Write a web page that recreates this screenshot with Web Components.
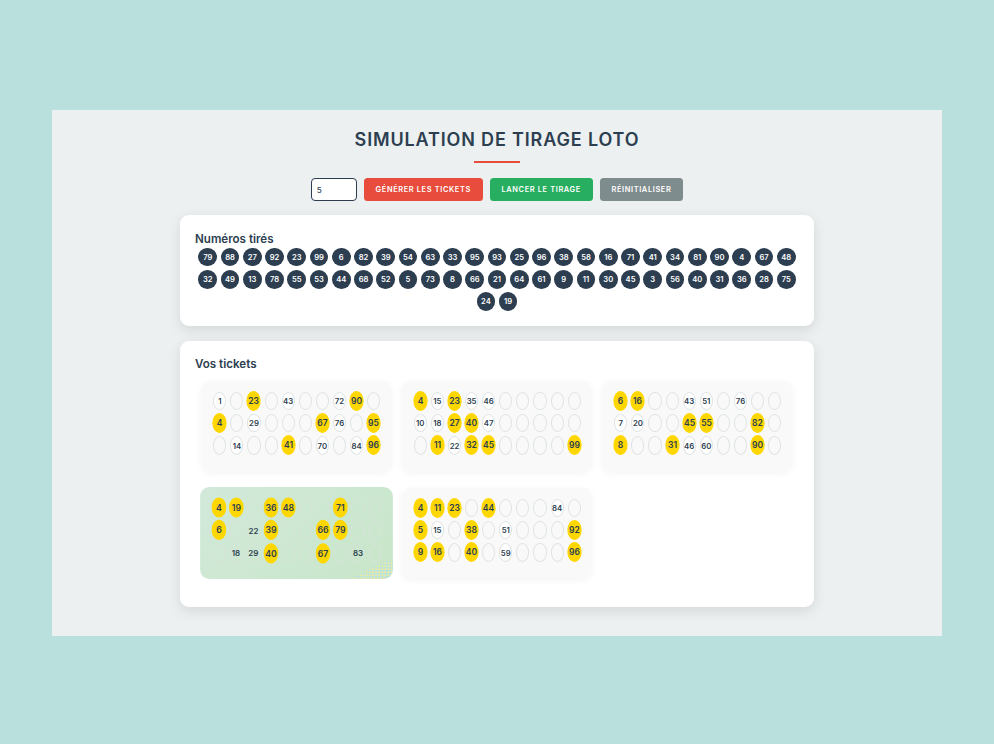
<!DOCTYPE html>
<html lang="fr">
<head>
<meta charset="utf-8">
<title>Simulation de tirage loto</title>
<style>
  html, body { margin: 0; height: 100%; }
  body {
    background: #b9e0dd;
    padding: 110px 52px 0;
    box-sizing: border-box;
    font-family: Inter, "Open Sans", sans-serif;
  }
</style>
</head>
<body>
<loto-app></loto-app>
<script>
const DRAWN = [79,88,27,92,23,99,6,82,39,54,63,33,95,93,25,96,38,58,16,71,41,34,81,90,4,67,48,
  32,49,13,78,55,53,44,68,52,5,73,8,66,21,64,61,9,11,30,45,3,56,40,31,36,28,75,24,19]

// 0 = empty cell
const TICKETS = [
  [1,0,23,0,43,0,0,72,90,0, 4,0,29,0,0,0,67,76,0,95, 0,14,0,0,41,0,70,0,84,96],
  [4,15,23,35,46,0,0,0,0,0, 10,18,27,40,47,0,0,0,0,0, 0,11,22,32,45,0,0,0,0,99],
  [6,16,0,0,43,51,0,76,0,0, 7,20,0,0,45,55,0,0,82,0, 8,0,0,31,46,60,0,0,90,0],
  [4,19,0,36,48,0,0,71,0,0, 6,0,22,39,0,0,66,79,0,0, 0,18,29,40,0,0,67,0,83,0],
  [4,11,23,0,44,0,0,0,84,0, 5,15,0,38,0,51,0,0,0,92, 9,16,0,40,0,59,0,0,0,96],
]

class LotoBall extends HTMLElement {
  constructor() {
    super()
    this.attachShadow({ mode: "open" })
  }

  connectedCallback() {
    this.shadowRoot.innerHTML = `
      <style>
        :host {
          width: 18.6px;
          height: 18.6px;
          margin: 1.83px;
          border-radius: 50%;
          display: inline-flex;
          align-items: center;
          justify-content: center;
          background: #2c3e50;
          color: #fff;
          font-size: 7.6px;
          font-weight: 600;
        }
      </style>
      <slot></slot>
    `
  }
}

class LotoCell extends HTMLElement {
  constructor() {
    super()
    this.attachShadow({ mode: "open" })
  }

  connectedCallback() {
    this.shadowRoot.innerHTML = `
      <style>
        :host {
          box-sizing: border-box;
          height: 18.4px;
          border: 0.9px solid #dfe3e4;
          border-radius: 50%;
          display: flex;
          align-items: center;
          justify-content: center;
          color: #2c3e50;
          font-size: 7.8px;
          font-weight: 600;
        }
        :host([filled]) { background: #fff; }
        :host([hit]) {
          background: #ffd700;
          border-color: #ffd700;
          transform: scale(1.1);
        }
      </style>
      <slot></slot>
    `
  }
}

class LotoTicket extends HTMLElement {
  constructor() {
    super()
    this.attachShadow({ mode: "open" })
  }

  connectedCallback() {
    const cells = (this.getAttribute("numbers") || "").split(",").map(Number)
    const html = cells.map((n) => {
      if (!n) return "<loto-cell></loto-cell>"
      return `<loto-cell filled ${DRAWN.includes(n) ? "hit" : ""}>${n}</loto-cell>`
    }).join("")

    this.shadowRoot.innerHTML = `
      <style>
        :host {
          box-sizing: border-box;
          position: relative;
          width: 189px;
          height: 90px;
          margin: 9px 4.75px 8px 6.75px;
          padding: 11px 11px 0 11.5px;
          border-radius: 9px;
          display: block;
          background: #f9f9f9;
          box-shadow: 0 2px 9px rgba(0, 0, 0, .05);
        }
        :host([hover]) {
          background: linear-gradient(135deg, #d2e9da, #c8e6c9);
          transform: scale(1.02);
          box-shadow: none;
        }
        /* speckle left in the corner of the hovered ticket */
        .speckle {
          position: absolute;
          right: 0;
          bottom: 0;
          width: 42px;
          height: 20px;
          border-bottom-right-radius: 9px;
          background:
            radial-gradient(circle, #e6e8a4 0 1px, transparent 1.1px) 0 0 / 3px 3px,
            radial-gradient(circle, #b2dfe6 0 1px, transparent 1.1px) 1.5px 1.5px / 3px 3px,
            #cde8c8;
          clip-path: polygon(100% 0, 100% 100%, 0 100%);
        }
        .grid {
          position: relative;
          display: grid;
          grid-template-columns: repeat(10, 13.1px);
          column-gap: 4px;
          row-gap: 3.95px;
        }
      </style>
      ${this.hasAttribute("hover") ? '<div class="speckle"></div>' : ""}
      <div class="grid">${html}</div>
    `

    if (this.hasAttribute("hover")) {
      this.shadowRoot.querySelectorAll("loto-cell:not([hit])").forEach((c) => {
        c.style.background = "transparent"
        c.style.borderColor = "#d5e4d8"
      })
    }
  }
}

class LotoCard extends HTMLElement {
  constructor() {
    super()
    this.attachShadow({ mode: "open" })
  }

  connectedCallback() {
    this.shadowRoot.innerHTML = `
      <style>
        :host {
          box-sizing: border-box;
          width: 634px;
          display: block;
          padding: 16.5px 15px 13px;
          border-radius: 9px;
          background: #fff;
          box-shadow: 0 4px 13px rgba(0, 0, 0, .1);
        }
        h2 {
          margin: 0;
          color: #2c3e50;
          font-size: 11.6px;
          line-height: 14.5px;
          font-weight: 600;
        }
      </style>
      <h2>${this.getAttribute("heading") || ""}</h2>
      <slot></slot>
    `
  }
}

class LotoControls extends HTMLElement {
  constructor() {
    super()
    this.attachShadow({ mode: "open" })
  }

  connectedCallback() {
    this.shadowRoot.innerHTML = `
      <style>
        :host {
          display: flex;
          justify-content: center;
          gap: 7px;
        }
        input {
          box-sizing: border-box;
          width: 46px;
          height: 23px;
          padding: 0 5px;
          border: 1px solid #2c3e50;
          border-radius: 4px;
          background: #fff;
          color: #2c3e50;
          font: 500 8px Inter, sans-serif;
          outline: none;
        }
        button {
          height: 23px;
          padding: 0 11.8px;
          border: 0;
          border-radius: 3.5px;
          color: #fff;
          font: 600 7.4px Inter, sans-serif;
          letter-spacing: .64px;
          text-transform: uppercase;
        }
        .red { background: #e74c3c; }
        .green { background: #27ae60; }
        .grey { background: #7f8c8d; }
      </style>
      <input type="number" value="5">
      <button class="red">Générer les tickets</button>
      <button class="green">Lancer le tirage</button>
      <button class="grey">Réinitialiser</button>
    `
  }
}

class LotoApp extends HTMLElement {
  constructor() {
    super()
    this.attachShadow({ mode: "open" })
  }

  connectedCallback() {
    const balls = DRAWN.map((n) => `<loto-ball>${n}</loto-ball>`).join("")
    const tickets = TICKETS.map((t, i) =>
      `<loto-ticket numbers="${t.join(",")}" ${i === 3 ? "hover" : ""}></loto-ticket>`).join("")

    this.shadowRoot.innerHTML = `
      <style>
        :host {
          box-sizing: border-box;
          height: 526px;
          padding-top: 18px;
          display: flex;
          flex-direction: column;
          align-items: center;
          background: #ecf0f1;
        }
        h1 {
          margin: 0;
          color: #2c3e50;
          font-size: 18px;
          line-height: 24px;
          font-weight: 600;
          letter-spacing: .85px;
        }
        .rule {
          width: 46px;
          height: 2px;
          margin: 9px 0 15px;
          background: #e74c3c;
        }
        loto-card { margin-top: 15px; }
        loto-controls + loto-card { margin-top: 14px; }
        .balls {
          display: flex;
          flex-wrap: wrap;
          justify-content: center;
        }
        .tickets {
          display: flex;
          flex-wrap: wrap;
          margin-bottom: 8px;
        }
      </style>
      <h1>SIMULATION DE TIRAGE LOTO</h1>
      <div class="rule"></div>
      <loto-controls></loto-controls>
      <loto-card heading="Numéros tirés"><div class="balls">${balls}</div></loto-card>
      <loto-card heading="Vos tickets"><div class="tickets">${tickets}</div></loto-card>
    `
  }
}

customElements.define("loto-ball", LotoBall)
customElements.define("loto-cell", LotoCell)
customElements.define("loto-ticket", LotoTicket)
customElements.define("loto-card", LotoCard)
customElements.define("loto-controls", LotoControls)
customElements.define("loto-app", LotoApp)
</script>
</body>
</html>
